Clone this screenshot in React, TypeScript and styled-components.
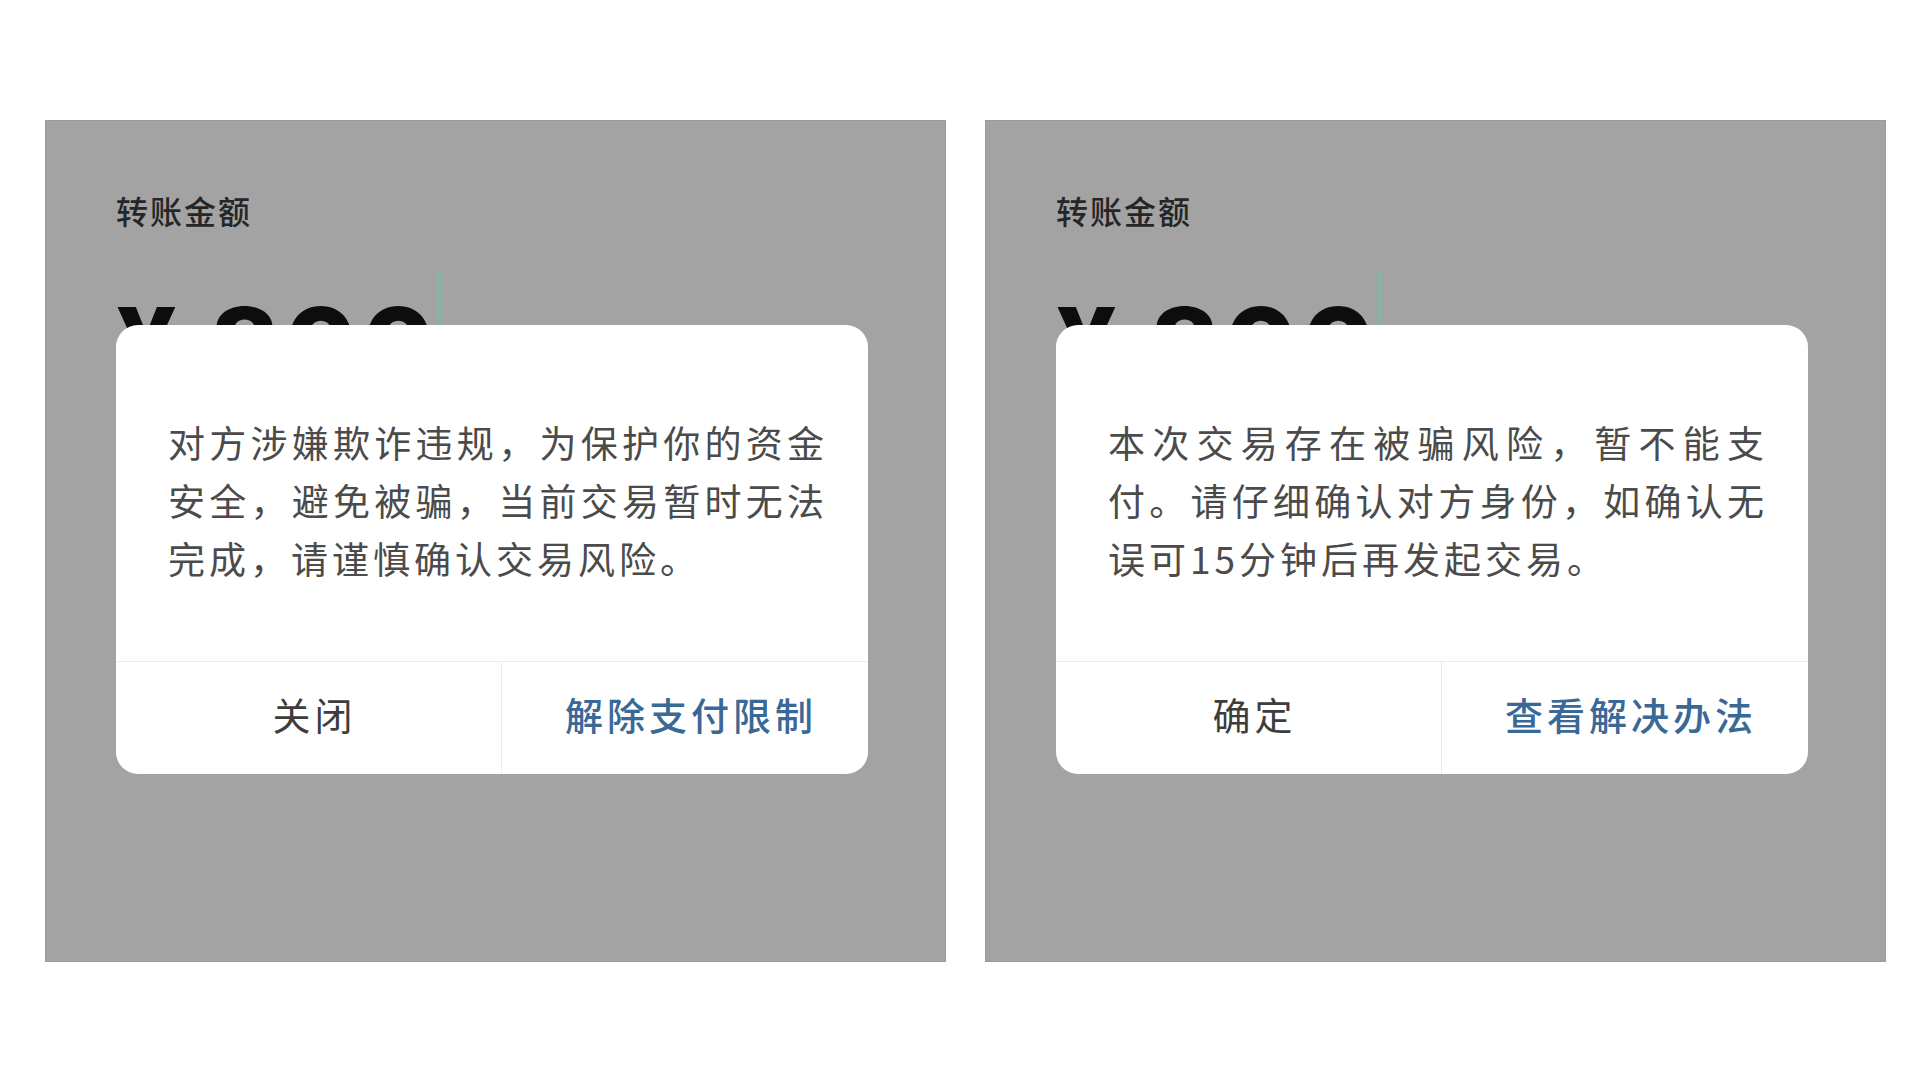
import React from "react";
import styled, { createGlobalStyle } from "styled-components";

const cjk = `"Noto Sans CJK SC", "Noto Sans", sans-serif`;

const GlobalStyle = createGlobalStyle`
  html, body {
    margin: 0;
    padding: 0;
    background: #ffffff;
    font-family: ${cjk};
  }
`;

const Page = styled.div`
  display: flex;
  gap: 39px;
  padding: 120px 0 0 45px;
  width: 1920px;
  height: 1077px;
  box-sizing: border-box;
`;

const Screen = styled.div`
  position: relative;
  width: 901px;
  height: 842px;
  background: #a3a3a3;
  box-shadow: inset 0 0 0 1px rgba(0, 0, 0, 0.05);
  padding: 70px 0 0 71px;
  box-sizing: border-box;
  overflow: hidden;
`;

const Label = styled.div`
  font-size: 32px;
  letter-spacing: 2px;
  line-height: 40px;
  color: #262626;
  font-weight: 500;
`;

const AmountRow = styled.div`
  display: flex;
  align-items: flex-start;
  margin-top: 62px;
`;

const Amount = styled.span`
  font-family: "Inter", "Liberation Sans", sans-serif;
  font-size: 105px;
  font-weight: 800;
  line-height: 1;
  color: #0d0d0d;
  letter-spacing: 5px;
`;

const Cursor = styled.span`
  width: 3px;
  height: 58px;
  margin: -20px 0 0 -2px;
  background: #86b5a6;
`;

const Dialog = styled.div`
  position: absolute;
  top: 205px;
  left: 71px;
  width: 752px;
  background: #ffffff;
  border-radius: 22px;
  overflow: hidden;
`;

const Message = styled.p`
  margin: 0;
  padding: 88px 40px 74px 52px;
  font-size: 37px;
  letter-spacing: 4px;
  line-height: 58px;
  color: #4b4b4b;
  text-align: justify;
`;

const Actions = styled.div`
  display: grid;
  grid-template-columns: 385px 1fr;
  border-top: 1px solid #ececec;
  height: 112px;
`;

const Action = styled.button<{ $primary?: boolean }>`
  border: none;
  background: transparent;
  font-family: ${cjk};
  font-size: 38px;
  letter-spacing: 4px;
  color: ${(p) => (p.$primary ? "#3a6897" : "#3d3d3d")};
  font-weight: ${(p) => (p.$primary ? 500 : 400)};
  padding: 0 0 10px 12px;
  & + & {
    border-left: 1px solid #ececec;
  }
`;

const TransferScreen = (props: {
  message: string;
  cancel: string;
  confirm: string;
}) => (
  <Screen>
    <Label>转账金额</Label>
    <AmountRow>
      <Amount>¥ 800</Amount>
      <Cursor />
    </AmountRow>
    <Dialog>
      <Message>{props.message}</Message>
      <Actions>
        <Action>{props.cancel}</Action>
        <Action $primary>{props.confirm}</Action>
      </Actions>
    </Dialog>
  </Screen>
);

export default function App() {
  return (
    <>
      <GlobalStyle />
      <Page>
        <TransferScreen
          message="对方涉嫌欺诈违规，为保护你的资金安全，避免被骗，当前交易暂时无法完成，请谨慎确认交易风险。"
          cancel="关闭"
          confirm="解除支付限制"
        />
        <TransferScreen
          message="本次交易存在被骗风险，暂不能支付。请仔细确认对方身份，如确认无误可15分钟后再发起交易。"
          cancel="确定"
          confirm="查看解决办法"
        />
      </Page>
    </>
  );
}
